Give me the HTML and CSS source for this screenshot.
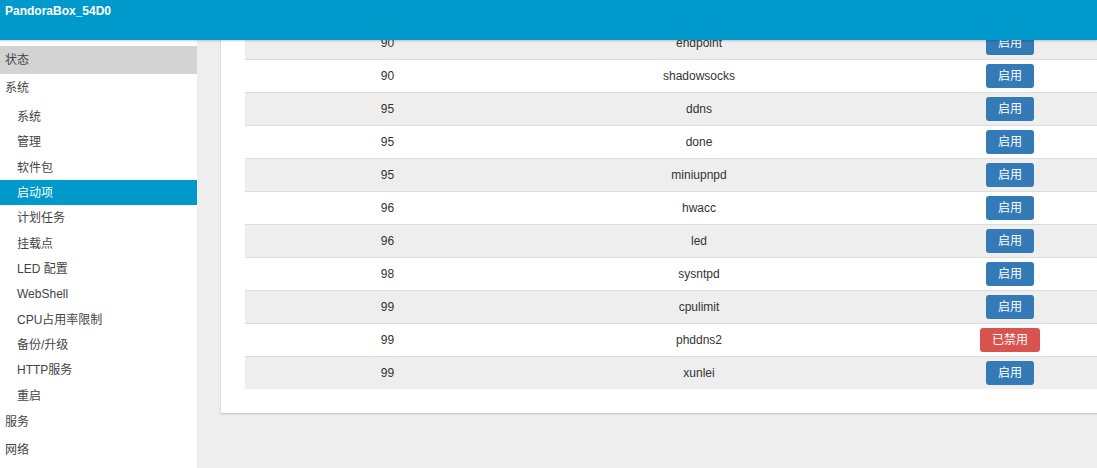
FILE: index.html
```html
<!DOCTYPE html>
<html lang="zh-CN">

<head>
    <meta charset="UTF-8">
    <meta name="viewport" content="width=device-width, initial-scale=1.0">
    <title>PandoraBox - 启动项</title>
    <link rel="stylesheet" href="styles.css">
</head>

<body>
    <header class="topbar">
        <span class="brand">PandoraBox_54D0</span>
    </header>

    <div class="layout">
        <nav class="sidebar">
            <ul class="menu">
                <li class="menu-item current"><a href="#">状态</a></li>
                <li class="menu-item">
                    <a href="#">系统</a>
                    <ul class="submenu">
                        <li><a href="#">系统</a></li>
                        <li><a href="#">管理</a></li>
                        <li><a href="#">软件包</a></li>
                        <li class="active"><a href="#">启动项</a></li>
                        <li><a href="#">计划任务</a></li>
                        <li><a href="#">挂载点</a></li>
                        <li><a href="#">LED 配置</a></li>
                        <li><a href="#">WebShell</a></li>
                        <li><a href="#">CPU占用率限制</a></li>
                        <li><a href="#">备份/升级</a></li>
                        <li><a href="#">HTTP服务</a></li>
                        <li><a href="#">重启</a></li>
                    </ul>
                </li>
                <li class="menu-item"><a href="#">服务</a></li>
                <li class="menu-item"><a href="#">网络</a></li>
            </ul>
        </nav>

        <main class="content">
            <div class="panel">
                <table class="startup-table">
                    <colgroup>
                        <col class="col-prio">
                        <col class="col-name">
                        <col class="col-action">
                    </colgroup>
                    <tbody>
                        <tr><td>90</td><td>endpoint</td><td><button class="btn btn-on">启用</button></td></tr>
                        <tr><td>90</td><td>shadowsocks</td><td><button class="btn btn-on">启用</button></td></tr>
                        <tr><td>95</td><td>ddns</td><td><button class="btn btn-on">启用</button></td></tr>
                        <tr><td>95</td><td>done</td><td><button class="btn btn-on">启用</button></td></tr>
                        <tr><td>95</td><td>miniupnpd</td><td><button class="btn btn-on">启用</button></td></tr>
                        <tr><td>96</td><td>hwacc</td><td><button class="btn btn-on">启用</button></td></tr>
                        <tr><td>96</td><td>led</td><td><button class="btn btn-on">启用</button></td></tr>
                        <tr><td>98</td><td>sysntpd</td><td><button class="btn btn-on">启用</button></td></tr>
                        <tr><td>99</td><td>cpulimit</td><td><button class="btn btn-on">启用</button></td></tr>
                        <tr><td>99</td><td>phddns2</td><td><button class="btn btn-off">已禁用</button></td></tr>
                        <tr><td>99</td><td>xunlei</td><td><button class="btn btn-on">启用</button></td></tr>
                    </tbody>
                </table>
            </div>
        </main>
    </div>
</body>

</html>
```

FILE: styles.css
```css
html,
body {
    margin: 0;
    height: 100%;
}

body {
    font-family: "Liberation Sans", "Noto Sans CJK SC", sans-serif;
    font-size: 12px;
    color: #333;
    background-color: #eee;
    overflow: hidden;
    display: flex;
    flex-direction: column;
}

/* top bar */
.topbar {
    position: relative;
    z-index: 2;
    flex: 0 0 40px;
    background-color: #0099cc;
    box-shadow: 0 1px 2px rgba(0, 0, 0, 0.2);
}

.brand {
    display: block;
    padding-left: 5px;
    line-height: 22px;
    font-weight: bold;
    color: #fff;
}

.layout {
    flex: 1;
    display: flex;
    min-height: 0;
}

/* sidebar */
.sidebar {
    flex: 0 0 197px;
    background-color: #fff;
    padding-top: 6px;
}

.menu,
.submenu {
    list-style: none;
    margin: 0;
    padding: 0;
}

.menu a {
    display: block;
    color: #444;
    text-decoration: none;
    white-space: nowrap;
}

.menu-item > a {
    height: 28px;
    line-height: 29px;
    padding-left: 5px;
}

.menu-item.current > a {
    background-color: #d3d3d3;
}

.submenu {
    padding-top: 2px;
}

.submenu a {
    height: 25.33px;
    line-height: 26px;
    padding-left: 17px;
}

.submenu .active a {
    background-color: #0099cc;
    color: #fff;
}

/* main area */
.content {
    flex: 1;
    overflow: hidden;
    padding-left: 24px;
}

.panel {
    width: 907px;
    margin-top: -38px;
    padding: 24px;
    background-color: #fff;
    box-shadow: 0 1px 2px rgba(0, 0, 0, 0.2);
}

.startup-table {
    width: 907px;
    border-collapse: separate;
    border-spacing: 0;
    table-layout: fixed;
}

.col-prio {
    width: 285px;
}

.col-name {
    width: 338px;
}

.col-action {
    width: 284px;
}

.startup-table td {
    height: 24px;
    padding: 4px 0;
    line-height: 24px;
    text-align: center;
    vertical-align: middle;
    border-top: 1px solid #ddd;
    white-space: nowrap;
}

.startup-table tr:nth-child(odd) td {
    background-color: #eee;
}

.btn {
    display: inline-block;
    vertical-align: top;
    height: 24px;
    padding: 0 12px;
    border: none;
    border-radius: 3px;
    font-family: inherit;
    font-size: 12px;
    line-height: 24px;
    color: #fff;
    cursor: pointer;
}

.btn-on {
    background-color: #337ab7;
}

.btn-off {
    background-color: #d9534f;
}
```
